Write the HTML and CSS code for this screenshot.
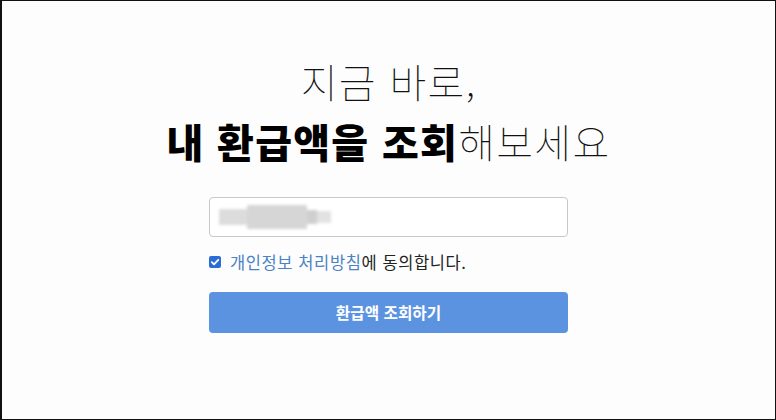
FILE: index.html
```html
<!DOCTYPE html>
<html lang="ko">
<head>
<meta charset="utf-8">
<link rel="stylesheet" href="styles.css">
</head>
<body>
<main class="page">
  <h1 class="title">
    <span class="line">지금 바로,</span>
    <span class="line"><strong>내 환급액을 조회</strong>해보세요</span>
  </h1>
  <form class="form">
    <div class="field">
      <span class="blur">
        <span class="b1"></span><span class="b2"></span><span class="b3"></span><span class="b4"></span>
      </span>
    </div>
    <label class="agree">
      <span class="check"><svg viewBox="0 0 12 12" width="12" height="12"><path d="M2.8 6.2 L5 8.3 L9.3 3.8" fill="none" stroke="#fff" stroke-width="1.8" stroke-linecap="round" stroke-linejoin="round"/></svg></span>
      <span class="agree-text"><a class="link">개인정보 처리방침</a>에 동의합니다.</span>
    </label>
    <button type="button" class="submit">환급액 조회하기</button>
  </form>
</main>
</body>
</html>
```

FILE: styles.css
```css
html, body {
  margin: 0;
  padding: 0;
}
body {
  width: 776px;
  height: 420px;
  box-sizing: border-box;
  border: 1px solid #111;
  border-left-width: 2px;
  background: #fdfdfd;
  font-family: "Noto Sans CJK KR", "Noto Sans", sans-serif;
  color: #222;
  overflow: hidden;
}
.page {
  display: flex;
  flex-direction: column;
  align-items: center;
  padding-top: 50px;
}
.title {
  margin: 0;
  display: flex;
  flex-direction: column;
  align-items: center;
  font-size: 40px;
  font-weight: 100;
  line-height: 60px;
  color: #111;
  letter-spacing: 1.3px;
}
.title strong {
  font-weight: 900;
  color: #000;
}
.form {
  margin-top: 26px;
  width: 359px;
  display: flex;
  flex-direction: column;
}
.field {
  height: 38px;
  border: 1px solid #c8c8c8;
  border-radius: 4px;
  background: #fff;
  display: flex;
  align-items: center;
  padding-left: 9px;
}
.blur {
  display: flex;
  align-items: center;
  filter: blur(1.5px);
}
.b1 { width: 28px; height: 16px; background: #dcdcdc; }
.b2 { width: 60px; height: 24px; background: #d6d6d6; }
.b3 { width: 10px; height: 14px; background: #cfcfcf; }
.b4 { width: 14px; height: 12px; background: #e2e2e2; }
.agree {
  margin-top: 15px;
  display: flex;
  align-items: center;
  gap: 9px;
  font-size: 16.5px;
  letter-spacing: 0.6px;
  line-height: 20px;
  color: #222;
}
.check {
  width: 12px;
  height: 12px;
  border-radius: 2px;
  background: #2b6cd6;
  display: flex;
}
.link {
  color: #4a82c6;
}
.submit {
  margin-top: 20px;
  height: 41px;
  border: 0;
  border-radius: 4px;
  background: #5b93e0;
  color: #fff;
  font-family: "Noto Sans CJK KR", sans-serif;
  font-weight: 700;
  font-size: 15.7px;
  padding: 0;
}
```
